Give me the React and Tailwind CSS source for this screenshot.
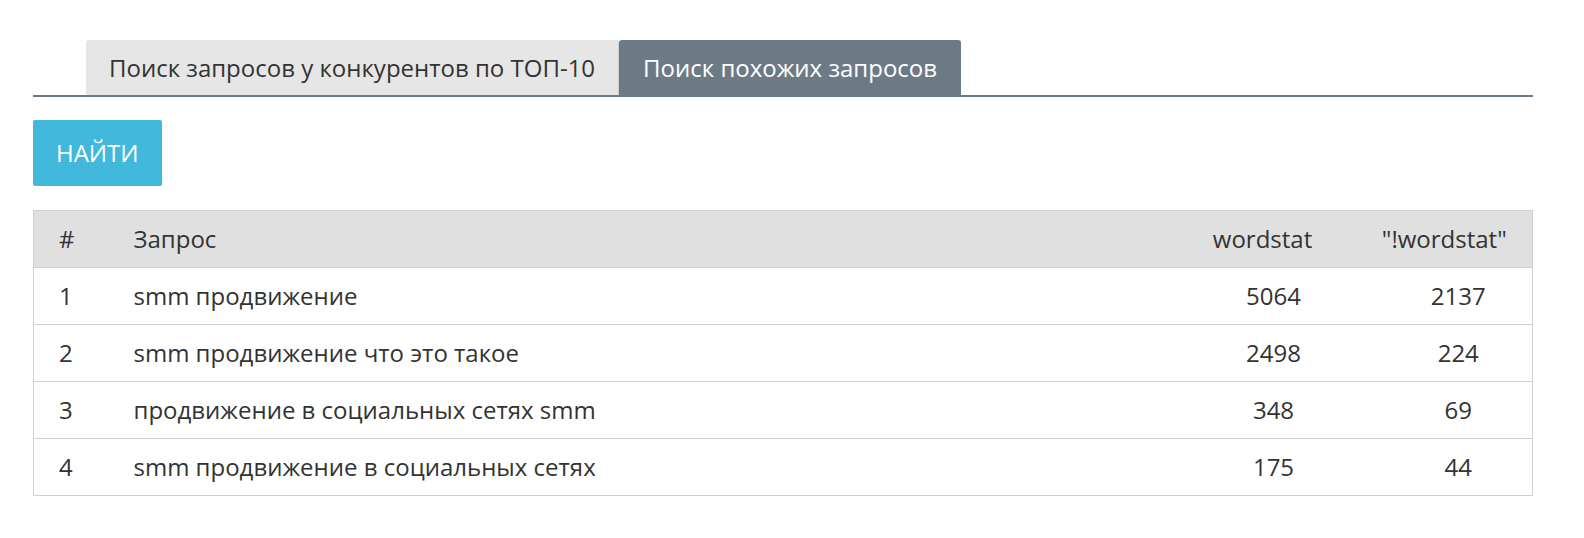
import React, { useState } from 'react';

const rows = [
    { id: 1, query: 'smm продвижение', ws: 5064, exact: 2137 },
    { id: 2, query: 'smm продвижение что это такое', ws: 2498, exact: 224 },
    { id: 3, query: 'продвижение в социальных сетях smm', ws: 348, exact: 69 },
    { id: 4, query: 'smm продвижение в социальных сетях', ws: 175, exact: 44 },
];

export default function App() {
    const [tab, setTab] = useState(1);

    return (
        <div className="min-h-[538px] bg-white pt-[40px] pl-[33px] font-['Open_Sans',sans-serif] text-[#333]">
            <div className="w-[1500px]">
                {/* TABS */}
                <div className="flex border-b-2 border-[#6c7a86] pl-[53px]">
                    <button
                        onClick={() => setTab(0)}
                        className={`h-[55px] px-[23px] rounded-t-[3px] text-[24px] border-r border-[#cfcfcf] ${tab === 0 ? 'bg-[#6c7a86] text-white' : 'bg-[#e6e6e6] text-[#333]'}`}
                    >
                        Поиск запросов у конкурентов по ТОП-10
                    </button>
                    <button
                        onClick={() => setTab(1)}
                        className={`h-[55px] px-[24px] rounded-t-[3px] text-[24px] ${tab === 1 ? 'bg-[#6c7a86] text-white' : 'bg-[#e6e6e6] text-[#333]'}`}
                    >
                        Поиск похожих запросов
                    </button>
                </div>

                {/* ACTION */}
                <button className="mt-[23px] h-[66px] px-[23px] rounded-[2px] bg-[#42b8dd] text-white text-[24px]">
                    НАЙТИ
                </button>

                {/* RESULTS */}
                <table className="mt-[24px] w-full border-collapse border-x border-[#d0d0d0] text-[24px]">
                    <thead>
                        <tr className="bg-[#e0e0e0] h-[57px] border-t border-[#d0d0d0]">
                            <th className="w-[100px] pl-[25px] text-left font-normal">#</th>
                            <th className="text-left font-normal">Запрос</th>
                            <th className="w-[188px] text-center font-normal">wordstat</th>
                            <th className="w-[176px] text-center font-normal">"!wordstat"</th>
                        </tr>
                    </thead>
                    <tbody>
                        {rows.map((r) => (
                            <tr key={r.id} className="h-[57px] border-t border-b border-[#d0d0d0]">
                                <td className="pl-[25px]">{r.id}</td>
                                <td>{r.query}</td>
                                <td className="text-center pl-[22px]">{r.ws}</td>
                                <td className="text-center pl-[28px]">{r.exact}</td>
                            </tr>
                        ))}
                    </tbody>
                </table>
            </div>
        </div>
    );
}
